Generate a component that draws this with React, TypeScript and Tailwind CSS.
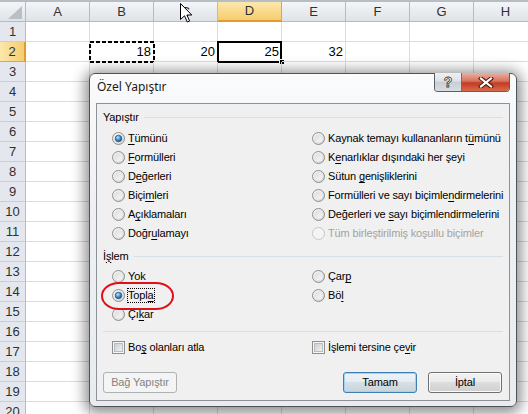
import type { ReactNode } from "react";

const COLS = ["A", "B", "C", "D", "E", "F", "G", "H"];
const ROWS = Array.from({ length: 20 }, (_, i) => i + 1);
const VALUES: Record<string, string> = { B2: "18", C2: "20", D2: "25", E2: "32" };

type Opt = { label: string; u?: number; checked?: boolean; disabled?: boolean; focus?: boolean };

const pasteLeft: Opt[] = [
  { label: "Tümünü", u: 0, checked: true },
  { label: "Formülleri", u: 0 },
  { label: "Değerleri", u: 1 },
  { label: "Biçimleri", u: 4 },
  { label: "Açıklamaları", u: 1 },
  { label: "Doğrulamayı", u: 4 },
];

const pasteRight: Opt[] = [
  { label: "Kaynak temayı kullananların tümünü", u: 29 },
  { label: "Kenarlıklar dışındaki her şeyi", u: 1 },
  { label: "Sütun genişliklerini", u: 6 },
  { label: "Formülleri ve sayı biçimlendirmelerini", u: 26 },
  { label: "Değerleri ve sayı biçimlendirmelerini", u: 13 },
  { label: "Tüm birleştirilmiş koşullu biçimler", disabled: true },
];

const opLeft: Opt[] = [
  { label: "Yok", u: 1 },
  { label: "Topla", u: 4, checked: true, focus: true },
  { label: "Çıkar", u: 2 },
];

const opRight: Opt[] = [
  { label: "Çarp", u: 3 },
  { label: "Böl", u: 2 },
];

function Ul({ text, at }: { text: string; at?: number }) {
  if (at === undefined) return <>{text}</>;
  return (
    <>
      {text.slice(0, at)}
      <span className="underline decoration-1 underline-offset-2">{text[at]}</span>
      {text.slice(at + 1)}
    </>
  );
}

// shared gradients for the radio / checkbox drawings
function GradientDefs() {
  return (
    <svg className="block h-0 w-0" aria-hidden>
      <defs>
        <linearGradient id="rbFill" x1="0" y1="0" x2="1" y2="1">
          <stop offset="0" stopColor="#fbfbfb" />
          <stop offset="1" stopColor="#cfd0d1" />
        </linearGradient>
        <linearGradient id="rbInner" x1="0" y1="0" x2="1" y2="1">
          <stop offset="0" stopColor="#dcdcdc" />
          <stop offset="1" stopColor="#f7f7f7" />
        </linearGradient>
        <radialGradient id="rbDot" cx="0.4" cy="0.35" r="0.7">
          <stop offset="0" stopColor="#c4e8fd" />
          <stop offset="0.45" stopColor="#4a9ad6" />
          <stop offset="1" stopColor="#12416b" />
        </radialGradient>
        <linearGradient id="cbInner" x1="0" y1="0" x2="1" y2="1">
          <stop offset="0" stopColor="#c9cdd2" />
          <stop offset="1" stopColor="#f3f4f5" />
        </linearGradient>
      </defs>
    </svg>
  );
}

function Radio({ checked, disabled }: { checked?: boolean; disabled?: boolean }) {
  return (
    <svg width="13" height="13" viewBox="0 0 13 13" className="shrink-0">
      <circle cx="6.5" cy="6.5" r="6" fill={disabled ? "#f4f4f4" : "url(#rbFill)"} stroke={disabled ? "#c6c6c6" : "#8e8f8f"} />
      <circle cx="6.5" cy="6.5" r="4" fill={disabled ? "#f4f4f4" : "url(#rbInner)"} />
      {checked && <circle cx="6.5" cy="6.5" r="3.3" fill="url(#rbDot)" stroke="#1c4a74" strokeWidth="0.6" />}
    </svg>
  );
}

function Check() {
  return (
    <svg width="13" height="13" viewBox="0 0 13 13" className="shrink-0">
      <rect x="0.5" y="0.5" width="12" height="12" fill="#f6f6f6" stroke="#8e8f8f" />
      <rect x="2.5" y="2.5" width="8" height="8" fill="url(#cbInner)" stroke="#b8bcc1" />
    </svg>
  );
}

function Option({ label, u, checked, disabled, focus }: Opt) {
  return (
    <div className="flex h-[19px] items-center gap-[3px]">
      <Radio checked={checked} disabled={disabled} />
      <span
        className={`whitespace-nowrap leading-[13px] ${disabled ? "text-[#a3a3a3]" : "text-black"} ${
          focus ? "outline-1 outline-dotted outline-black" : ""
        }`}
      >
        <Ul text={label} at={u} />
      </span>
    </div>
  );
}

function GroupHeader({ children }: { children: ReactNode }) {
  return (
    <div className="flex h-[16px] items-center gap-[5px]">
      <span className="whitespace-nowrap">{children}</span>
      <div className="h-px flex-1 bg-[#d5dfe5]" />
    </div>
  );
}

function WinButton({ children, variant = "normal", className = "" }: { children: ReactNode; variant?: "normal" | "default" | "disabled"; className?: string }) {
  const look = {
    normal: "border-[#707070] bg-[linear-gradient(#f2f2f2,#ebebeb_45%,#dddddd_50%,#cfcfcf)] text-black shadow-[inset_0_0_0_1px_#fbfbfb]",
    default: "border-[#3c7fb1] bg-[linear-gradient(#eef4f8,#e4ecf2_45%,#d6dfe6_50%,#c9d4dc)] text-black shadow-[inset_0_0_0_1px_#9fd5f4]",
    disabled: "border-[#adb2b5] bg-[#f4f4f4] text-[#838383]",
  }[variant];
  return (
    <button type="button" className={`h-[21px] rounded-[3px] border text-[11px] leading-none ${look} ${className}`}>
      {children}
    </button>
  );
}

function Sheet() {
  return (
    <div className="flex flex-col font-['Liberation_Sans',Arial,sans-serif] text-[13px] text-black">
      <div className="h-[2px] bg-[#b7bdc5]" />
      <div className="flex h-[20px]">
        <div className="relative w-[26px] shrink-0 border-r border-b border-[#b4bbc4] bg-[linear-gradient(#f3f5f7,#dfe3e8)]">
          <svg width="14" height="13" viewBox="0 0 14 13" className="absolute right-[3px] bottom-[2px]">
            <polygon points="14,0 14,13 0,13" fill="#b9bfc7" />
          </svg>
        </div>
        {COLS.map((c) => (
          <div
            key={c}
            className={`flex w-[64px] shrink-0 items-center justify-center border-r ${
              c === "D"
                ? "border-b-2 border-r-[#d9a84a] border-b-[#e39a2e] bg-[linear-gradient(#fce7ac,#f6cd6f)]"
                : "border-b border-[#b4bbc4] bg-[linear-gradient(#f3f5f7,#dfe3e8)]"
            } text-[#303030]`}
          >
            {c}
          </div>
        ))}
      </div>
      {ROWS.map((r) => (
        <div key={r} className="flex h-[20px]">
          <div
            className={`flex w-[26px] shrink-0 items-center justify-center border-b text-[#303030] ${
              r === 2
                ? "border-r-2 border-r-[#e39a2e] border-b-[#d9a84a] bg-[linear-gradient(90deg,#fce7ac,#f6cd6f)]"
                : "border-r border-r-[#b4bbc4] border-b-[#c9ced5] bg-[#e4e8ee]"
            }`}
          >
            {r}
          </div>
          {COLS.map((c) => {
            const key = `${c}${r}`;
            return (
              <div
                key={key}
                className="relative flex w-[64px] shrink-0 items-center justify-end border-r border-b border-[#dadcdd] pr-[2px]"
              >
                {VALUES[key]}
                {key === "B2" && (
                  <svg width="66" height="22" className="absolute -left-[1px] -top-[1px]">
                    <rect x="1" y="1" width="64" height="20" fill="none" stroke="#000" strokeWidth="2" strokeDasharray="4 2" />
                  </svg>
                )}
                {key === "D2" && (
                  <>
                    <div className="absolute -left-[1px] -top-[1px] h-[22px] w-[65px] border-2 border-black" />
                    <div className="absolute -right-[4px] -bottom-[4px] h-[6px] w-[6px] border border-white bg-black" />
                  </>
                )}
              </div>
            );
          })}
        </div>
      ))}
    </div>
  );
}

function Cursor() {
  return (
    <svg width="13" height="20" viewBox="0 0 13 20" className="absolute left-[180px] top-[3px]">
      <path d="M0.5 0.5 L0.5 16.5 L4.5 12.8 L7.3 19 L9.6 18 L6.9 12 L11.8 12 Z" fill="#fff" stroke="#000" strokeWidth="1" strokeLinejoin="round" />
    </svg>
  );
}

function PasteSpecialDialog() {
  return (
    <div className="absolute left-[89px] top-[73px] flex h-[334px] w-[428px] flex-col rounded-[6px] border border-[#4f5358] bg-[linear-gradient(#fafbfc,#eef0f3_40%,#e9ecef)] shadow-[0_2px_14px_4px_rgba(0,0,0,0.45)] font-['Liberation_Sans',Arial,sans-serif] text-[11px] tracking-[-0.15px] text-black">
      {/* title bar */}
      <div className="h-[29px] shrink-0 pl-[7px] pt-[5px]">
        <span className="font-['Noto_Sans',sans-serif] text-[12px] leading-[16px] tracking-normal text-[#1a1a1a]">Özel Yapıştır</span>
      </div>
      <div className="absolute right-[6px] -top-[1px] flex h-[19px] overflow-hidden rounded-b-[4px] border border-t-0 border-[#5b5f66]">
        <div className="flex w-[27px] items-center justify-center border-r border-[#6a6e75] bg-[linear-gradient(#eef0f3,#dde1e6_45%,#c9ced5_50%,#d8dde3)] text-[14px] font-bold text-white [-webkit-text-stroke:0.8px_#404040]">
          ?
        </div>
        <div className="flex w-[47px] items-center justify-center bg-[linear-gradient(#eab0a3,#d8725d_45%,#c43b22_55%,#d66a4c)]">
          <svg width="16" height="11" viewBox="0 0 16 11">
            <path d="M3 1.5 L13 9.5 M13 1.5 L3 9.5" stroke="#4a1a10" strokeWidth="4.2" strokeLinecap="square" />
            <path d="M3 1.5 L13 9.5 M13 1.5 L3 9.5" stroke="#fff" strokeWidth="2.2" strokeLinecap="square" />
          </svg>
        </div>
      </div>

      {/* client area */}
      <div className="mx-[6px] flex h-[298px] flex-col border border-[#8d9198] bg-[#f0f0f0] px-[6px] pt-[5px]">
        <GroupHeader>Yapıştır</GroupHeader>
        <div className="mt-[4px] ml-[9px] grid grid-cols-[200px_1fr]">
          <div className="flex flex-col">
            {pasteLeft.map((o) => (
              <Option key={o.label} {...o} />
            ))}
          </div>
          <div className="flex flex-col">
            {pasteRight.map((o) => (
              <Option key={o.label} {...o} />
            ))}
          </div>
        </div>

        <div className="mt-[5px]">
          <GroupHeader>
            <Ul text="İşlem" at={1} />
          </GroupHeader>
        </div>
        <div className="mt-[3px] ml-[9px] grid grid-cols-[200px_1fr]">
          <div className="flex flex-col">
            {opLeft.map((o) => (
              <Option key={o.label} {...o} />
            ))}
          </div>
          <div className="flex flex-col">
            {opRight.map((o) => (
              <Option key={o.label} {...o} />
            ))}
          </div>
        </div>

        <div className="mt-[7px] h-px bg-[#d5dfe5]" />

        <div className="mt-[6px] ml-[9px] grid h-[19px] grid-cols-[200px_1fr]">
          <div className="flex items-center gap-[3px]">
            <Check />
            <span className="leading-[13px]">
              <Ul text="Boş olanları atla" at={2} />
            </span>
          </div>
          <div className="flex items-center gap-[3px]">
            <Check />
            <span className="leading-[13px]">
              <Ul text="İşlemi tersine çevir" at={17} />
            </span>
          </div>
        </div>

        <div className="mt-[15px] flex items-center">
          <WinButton variant="disabled" className="w-[74px]">
            Bağ Yapıştır
          </WinButton>
          <div className="ml-auto flex gap-[11px] pr-px">
            <WinButton variant="default" className="w-[74px]">
              Tamam
            </WinButton>
            <WinButton className="w-[74px]">İptal</WinButton>
          </div>
        </div>
      </div>

      {/* red annotation round the chosen operation */}
      <div className="absolute left-[11px] top-[208px] h-[28px] w-[73px] rounded-[18px/14px] border-2 border-[#e0101a]" />
    </div>
  );
}

export default function App() {
  return (
    <div className="relative h-[414px] w-[528px] overflow-hidden bg-white">
      <GradientDefs />
      <Sheet />
      <Cursor />
      <PasteSpecialDialog />
    </div>
  );
}
